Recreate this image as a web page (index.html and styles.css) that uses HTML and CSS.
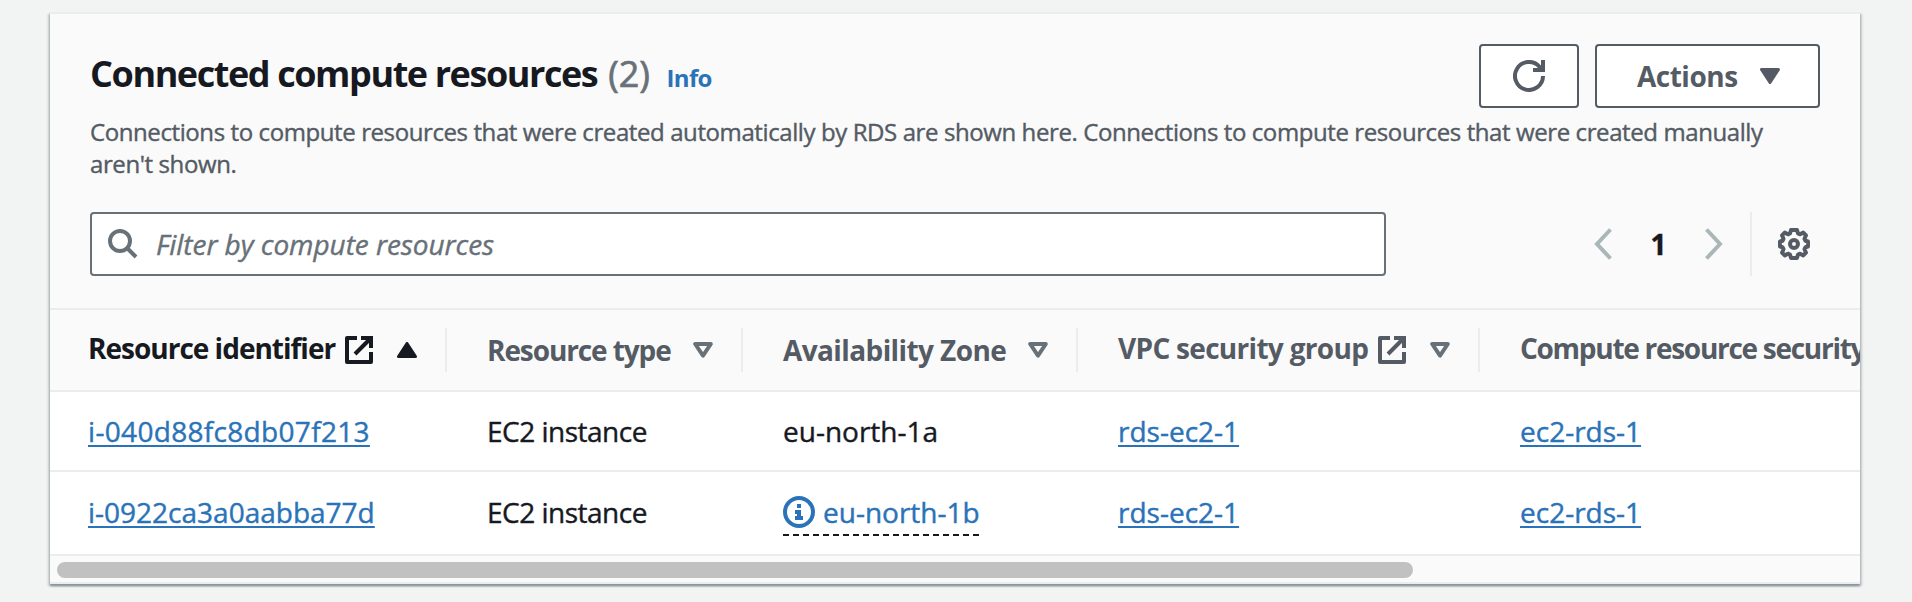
FILE: index.html
```html
<!DOCTYPE html>
<html lang="en">
<head>
<meta charset="utf-8">
<title>Connected compute resources</title>
<link rel="stylesheet" href="styles.css">
</head>
<body>
<svg class="sprite" aria-hidden="true">
  <symbol id="external" viewBox="0 0 28 28">
    <path d="M12 2H2v24h24V16" fill="none" stroke="currentColor" stroke-width="4" stroke-linejoin="round"/>
    <path d="M16 2h10v10M26 2L10 18" fill="none" stroke="currentColor" stroke-width="4"/>
  </symbol>
  <symbol id="sort" viewBox="0 0 20 16">
    <path d="M2.2 2h15.6L10 13.6z" fill="none" stroke="currentColor" stroke-width="4" stroke-linejoin="round"/>
  </symbol>
</svg>
<main class="card">
  <header class="head">
    <div class="title-row">
      <h2 class="title">Connected compute resources</h2>
      <span class="count">(2)</span>
      <a class="info" href="#">Info</a>
      <div class="buttons">
        <button class="btn btn-refresh" aria-label="Refresh">
          <svg width="32" height="32" viewBox="0 0 32 32" fill="none" stroke="currentColor" stroke-width="4"><path d="M30 16A14 14 0 1 1 26.500 6.700L29 10M30 0v10H20"/></svg>
        </button>
        <button class="btn btn-actions"><span>Actions</span>
          <svg width="20" height="16" viewBox="0 0 20 16"><path d="M1.500 1.500h17L10 14.500z" fill="currentColor" stroke="currentColor" stroke-width="3" stroke-linejoin="round"/></svg>
        </button>
      </div>
    </div>
    <p class="desc">Connections to compute resources that were created automatically by RDS are shown here. Connections to compute resources that were created manually <br>aren't shown.</p>
    <div class="tools">
      <div class="filter">
        <svg width="30" height="30" viewBox="0 0 30 30" fill="none" stroke="currentColor" stroke-width="4"><circle cx="12" cy="12" r="10"/><path d="M19 19l9 9"/></svg>
        <span>Filter by compute resources</span>
      </div>
      <div class="pager">
        <svg width="18" height="32" viewBox="0 0 18 32" fill="none" stroke="currentColor" stroke-width="4"><path d="M16.500 1.500L3 16l13.500 14.500"/></svg>
        <span class="page">1</span>
        <svg width="18" height="32" viewBox="0 0 18 32" fill="none" stroke="currentColor" stroke-width="4"><path d="M1.500 1.500L15 16 1.500 30.500"/></svg>
      </div>
      <div class="settings">
        <svg width="32" height="32" viewBox="0 0 32 32" fill="none" stroke="currentColor" stroke-width="4" stroke-linejoin="round"><path d="M13 2h6l1 3.500 2 .8 3.300-1.700 2.700 2.700-1.500 3.500 1 2 2.500.7v5l-2.500.7-1 2 1.500 3.500-2.700 2.700-3.300-1.700-2 .8L19 30h-6l-1-3.500-2-.8-3.300 1.700L4 24.700l1.500-3.500-1-2L2 18.500v-5l2.500-.7 1-2L4 7.300l2.700-2.700L10 6.300l2-.8z"/><circle cx="16" cy="16" r="4"/></svg>
      </div>
    </div>
  </header>
  <section class="table">
    <div class="row row-head">
      <div class="cell sorted raised"><span class="w1">Resource identifier</span><svg class="ext"><use href="#external"/></svg><svg class="tri" viewBox="0 0 20 16"><path d="M1.500 14.500h17L10 1.500z" fill="currentColor" stroke="currentColor" stroke-width="3" stroke-linejoin="round"/></svg></div>
      <div class="cell"><span class="w2">Resource type</span><svg class="tri"><use href="#sort"/></svg></div>
      <div class="cell"><span class="w3">Availability Zone</span><svg class="tri"><use href="#sort"/></svg></div>
      <div class="cell raised"><span class="w4">VPC security group</span><svg class="ext"><use href="#external"/></svg><svg class="tri"><use href="#sort"/></svg></div>
      <div class="cell raised"><span class="w5">Compute resource security</span></div>
    </div>
    <div class="row row-one">
      <div class="cell"><a class="id-one" href="#">i-040d88fc8db07f213</a></div>
      <div class="cell"><span class="ec2">EC2 instance</span></div>
      <div class="cell">eu-north-1a</div>
      <div class="cell"><a href="#">rds-ec2-1</a></div>
      <div class="cell"><a href="#">ec2-rds-1</a></div>
    </div>
    <div class="row row-two">
      <div class="cell"><a href="#">i-0922ca3a0aabba77d</a></div>
      <div class="cell"><span class="ec2">EC2 instance</span></div>
      <div class="cell"><span class="zone">
        <svg width="32" height="32" viewBox="0 0 32 32"><circle cx="16" cy="16" r="14" fill="none" stroke="currentColor" stroke-width="4"/><path d="M14 8h4v4h-4zM12 14h6v6h2v4h-8v-4h2v-2h-2z" fill="currentColor"/></svg>
        <span>eu-north-1b</span></span></div>
      <div class="cell"><a href="#">rds-ec2-1</a></div>
      <div class="cell"><a href="#">ec2-rds-1</a></div>
    </div>
  </section>
  <div class="scrollbar"><div class="thumb"></div></div>
</main>
</body>
</html>
```
FILE: styles.css
```css
* { box-sizing: border-box; }
body {
  margin: 0;
  padding: 12px 52px 0 50px;
  height: 602px;
  overflow: hidden;
  background: #f2f3f3;
  color: #16191f;
  font: 400 28px/40px "Open Sans", "Noto Sans", sans-serif;
  -webkit-text-stroke: .4px currentColor;
}
.sprite { display: none; }
svg { display: block; flex: none; }
.card {
  height: 572px;
  border-top: 2px solid #eaeded;
  background: #fafafa;
  box-shadow: 0 2px 2px 0 #8a929b, 2px 2px 2px 0 rgba(0, 28, 36, .16), -2px 2px 2px 0 rgba(0, 28, 36, .16);
}
.head {
  height: 296px;
  padding: 30px 40px 0;
  border-bottom: 2px solid #eaeded;
}
.title-row { display: flex; height: 64px; }
.title, .count {
  margin: 5px 0 0;
  font-size: 36px;
  line-height: 50px;
  letter-spacing: -1.42px;
}
.title { font-weight: 700; -webkit-text-stroke: 0; }
.count { margin-left: 11px; letter-spacing: -.2px; color: #687078; -webkit-text-stroke: .7px currentColor; }
.info {
  margin: 13px 0 0 17px;
  font-size: 24px;
  line-height: 42px;
  font-weight: 700;
  letter-spacing: -.7px;
  color: #2a73b8;
  text-decoration: none;
  -webkit-text-stroke: 0;
}
.buttons { display: flex; gap: 16px; margin-left: auto; }
.btn {
  display: flex;
  align-items: center;
  height: 64px;
  border: 2px solid #545b64;
  border-radius: 4px;
  background: #fff;
  color: #545b64;
  font: 700 28px/40px "Open Sans", "Noto Sans", sans-serif;
  letter-spacing: -.5px;
  -webkit-text-stroke: 0;
}
.btn-refresh { width: 100px; justify-content: center; padding: 0; }
.btn-actions { width: 225px; padding: 0 38px 0 40px; justify-content: space-between; }
.desc {
  margin: 8px 0 32px;
  font-size: 24px;
  line-height: 32px;
  letter-spacing: -.405px;
  color: #545b64;
  white-space: nowrap;
}
.tools { display: flex; height: 64px; }
.filter {
  display: flex;
  align-items: center;
  gap: 18px;
  width: 1296px;
  padding-left: 16px;
  border: 2px solid #687078;
  border-radius: 4px;
  background: #fff;
  color: #687078;
  font-style: italic;
  letter-spacing: -.06px;
}
.pager {
  display: flex;
  align-items: center;
  gap: 38px;
  margin-left: auto;
  padding-right: 27px;
  color: #aab7b8;
}
.page { width: 17px; text-align: center; font-weight: 700; color: #16191f; }
.settings {
  display: flex;
  align-items: center;
  width: 70px;
  padding-left: 26px;
  border-left: 2px solid #eaeded;
  color: #545b64;
}
.table { overflow: hidden; }
.row {
  display: grid;
  grid-template-columns: 397px 296px 335px 402px 640px;
  width: 2070px;
  border-bottom: 2px solid #eaeded;
  background: #fff;
}
.row-head {
  height: 82px;
  padding: 18px 0;
  background: #fafafa;
  font-weight: 700;
  color: #545b64;
  -webkit-text-stroke: 0;
}
.row-one { height: 80px; }
.row-two { height: 84px; }
.row-two .cell { padding-bottom: 2px; }
.cell {
  display: flex;
  align-items: center;
  padding-left: 40px;
  white-space: nowrap;
}
.cell:first-child { padding-left: 38px; }
.row-head .cell { padding-right: 28px; border-right: 2px solid #eaeded; }
.row-head .cell span { padding-top: 2px; height: 44px; }
.row-head .raised span { margin-top: -4px; }
.sorted { color: #16191f; }
.ext { width: 28px; height: 28px; margin-left: 10px; }
.tri { width: 20px; height: 16px; margin-left: auto; color: #687078; }
.sorted .tri { color: inherit; }
.w1 { letter-spacing: -1px; }
.w2 { letter-spacing: -1.1px; }
.w3 { letter-spacing: -.6px; }
.w4 { letter-spacing: -.7px; }
.w5 { letter-spacing: -1.28px; }
.ec2 { letter-spacing: -.5px; }
.id-one { letter-spacing: .32px; }
.cell a {
  color: #2a73b8;
  text-decoration: underline 2px;
  text-underline-offset: 3px;
  text-decoration-skip-ink: none;
}
.zone {
  display: flex;
  align-items: center;
  gap: 8px;
  height: 40px;
  margin-top: 8px;
  padding-bottom: 8px;
  color: #2a73b8;
  background: repeating-linear-gradient(90deg, #16191f 0 6px, transparent 6px 10px) 0 100% / 100% 2px no-repeat;
}
.scrollbar { height: 28px; padding: 6px 7px; border-bottom: 2px solid #eaeded; }
.thumb { width: 1356px; height: 16px; border-radius: 8px; background: #c1c1c1; }
```
